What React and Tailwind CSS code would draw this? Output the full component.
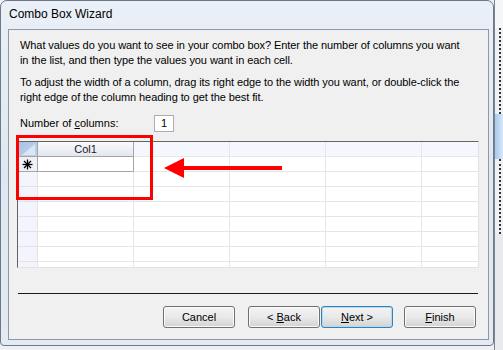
import React from 'react';

const font = { fontFamily: '"Liberation Sans", Arial, sans-serif' };

const Asterisk = () => (
    <svg width="11" height="11" viewBox="0 0 11 11">
        <g stroke="#000" strokeWidth="1.3">
            <line x1="5.5" y1="0.5" x2="5.5" y2="10.5" />
            <line x1="0.5" y1="5.5" x2="10.5" y2="5.5" />
            <line x1="2" y1="2" x2="9" y2="9" />
            <line x1="9" y1="2" x2="2" y2="9" />
        </g>
    </svg>
);

const Corner = () => (
    <svg width="19" height="14" viewBox="0 0 19 14" className="block">
        <defs>
            <linearGradient id="cg" x1="0" y1="0" x2="1" y2="1">
                <stop offset="0" stopColor="#a9c1e3" />
                <stop offset="1" stopColor="#c2d4ec" />
            </linearGradient>
        </defs>
        <rect width="19" height="14" fill="url(#cg)" />
        <polygon points="4,13 17,2 17,13" fill="#dde7f4" />
    </svg>
);

const Button = ({ children, focused }) => (
    <div
        className={
            "w-[72px] h-[22px] rounded-[3px] border flex items-center justify-center text-[11px] text-black whitespace-pre bg-gradient-to-b from-[#f3f3f3] via-[#e9e9e9] to-[#d3d3d3] " +
            (focused ? "border-[#3c7fb1] shadow-[inset_0_0_0_1px_#a9dcf8]" : "border-[#707070] shadow-[inset_0_0_0_1px_#fbfbfb]")
        }
    >
        {children}
    </div>
);

const DataRow = ({ first }) => (
    <div className="flex h-[15px] shrink-0">
        <div className={"w-[20px] shrink-0 border-r border-b flex items-center justify-center " + (first ? "bg-[#eef1f8] border-[#a5a5a5]" : "bg-[#f3f4fd] border-[#e3e3e3]")}>
            {first && <Asterisk />}
        </div>
        <div className={"w-[96px] shrink-0 bg-white border-r border-b " + (first ? "border-[#a5a5a5]" : "border-[#e6e6e6]")} />
        <div className="w-[96px] shrink-0 bg-white border-r border-b border-[#e6e6e6]" />
        <div className="w-[96px] shrink-0 bg-white border-r border-b border-[#e6e6e6]" />
        <div className="w-[96px] shrink-0 bg-white border-r border-b border-[#e6e6e6]" />
        <div className="flex-1 bg-white border-b border-[#e6e6e6]" />
    </div>
);

export default function App() {
    return (
        <div className="relative w-[503px] h-[350px] overflow-hidden bg-[#eef0f3] flex" style={font}>
            {/* dialog window */}
            <div className="w-[494px] h-[346px] shrink-0 rounded-t-[7px] rounded-b-[4px] border border-[#6e7886] bg-gradient-to-b from-[#e9f0f8] via-[#dfe8f2] to-[#e3eaf3] flex flex-col">
                <div className="h-[28px] shrink-0 pl-[8px] pt-[5px] text-[12px] text-black leading-[16px]">Combo Box Wizard</div>
                <div className="ml-[7px] w-[481px] h-[311px] border border-[#8d99a7] bg-[#f0f0f0] flex flex-col pl-[11px] pr-[10px] pt-[8px] text-[11px] text-black">
                    <p className="leading-[15px] tracking-[-0.08px]">
                        What values do you want to see in your combo box? Enter the number of columns you want<br />
                        in the list, and then type the values you want in each cell.
                    </p>
                    <p className="leading-[15px] mt-[7px] tracking-[-0.08px]">
                        To adjust the width of a column, drag its right edge to the width you want, or double-click the<br />
                        right edge of the column heading to get the best fit.
                    </p>
                    <div className="flex items-center mt-[10px] h-[17px]">
                        <span className="w-[134px] leading-[15px]">Number of <span className="underline">c</span>olumns:</span>
                        <div className="w-[20px] h-[17px] bg-white border border-[#abadb3] flex items-center justify-center leading-none">1</div>
                    </div>
                    {/* datasheet grid */}
                    <div className="ml-[-3px] mt-[9px] w-[462px] h-[127px] border-t border-l border-[#646464] border-r border-b border-r-[#e3e3e3] border-b-[#e3e3e3] bg-white overflow-hidden flex flex-col">
                        <div className="flex h-[15px] shrink-0">
                            <div className="w-[20px] shrink-0 border-r border-b border-[#a5a5a5]">
                                <Corner />
                            </div>
                            <div className="w-[96px] shrink-0 border-r border-b border-[#a5a5a5] bg-gradient-to-b from-[#f9fafc] to-[#e2e7ef] flex items-center justify-center text-[11px] leading-none text-[#1a1a1a]">Col1</div>
                            <div className="w-[96px] shrink-0 bg-[#f5f7fe] border-r border-b border-[#e6e6ee]" />
                            <div className="w-[96px] shrink-0 bg-[#f5f7fe] border-r border-b border-[#e6e6ee]" />
                            <div className="w-[96px] shrink-0 bg-[#f5f7fe] border-r border-b border-[#e6e6ee]" />
                            <div className="flex-1 bg-[#f5f7fe] border-b border-[#e6e6ee]" />
                        </div>
                        <DataRow first />
                        <DataRow />
                        <DataRow />
                        <DataRow />
                        <DataRow />
                        <DataRow />
                        <DataRow />
                        <DataRow />
                    </div>
                    <div className="mt-[25px] ml-[-2px] w-[460px] h-[1px] bg-[#1b1b1b]" />
                    <div className="mt-[12px] flex ml-[143px]">
                        <Button>Cancel</Button>
                        <div className="ml-[13px]"><Button>{'< '}<span className="underline">B</span>ack</Button></div>
                        <div className="ml-[1px]"><Button focused><span className="underline">N</span>{'ext >'}</Button></div>
                        <div className="ml-[11px]"><Button><span className="underline">F</span>inish</Button></div>
                    </div>
                </div>
            </div>
            {/* application behind the dialog */}
            <div className="flex-1 flex flex-col border-l border-[#7b8591]">
                <div className="h-[28px] bg-[#f4f6f8]" />
                <div className="h-[86px] bg-[#eef0f2] border-r-2 border-dotted border-[#333] mr-[2px]" />
                <div className="h-[45px] bg-gradient-to-r from-[#a7c9ec] to-[#d9e8f7]" />
                <div className="h-[75px] bg-[#eef0f2] border-r-2 border-dotted border-[#333] mr-[2px]" />
                <div className="flex-1 bg-[#e8eaed]" />
            </div>

            {/* red annotation */}
            <div className="absolute left-[16px] top-[135px] w-[137px] h-[65px] border-[3px] border-[#ff0000]" />
            <svg className="absolute left-[162px] top-[156px]" width="122" height="24" viewBox="0 0 122 24">
                <polygon points="2,12 22,2 22,22" fill="#ff0000" />
                <rect x="20" y="10" width="100" height="4" fill="#ff0000" />
            </svg>
        </div>
    );
}
